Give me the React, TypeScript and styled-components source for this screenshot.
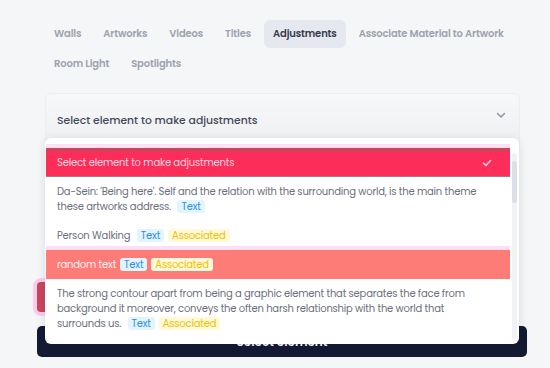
import React from "react";
import styled, { createGlobalStyle } from "styled-components";

const GlobalStyle = createGlobalStyle`
  html, body { margin: 0; padding: 0; }
  body {
    background: #f4f6f7;
    font-family: "Poppins", "Inter", "Noto Sans", sans-serif;
    -webkit-font-smoothing: antialiased;
  }
  * { box-sizing: border-box; }
`;

const Page = styled.div`
  position: relative;
  width: 550px;
  height: 368px;
  overflow: hidden;
  background: #f4f6f7;
  padding: 20px 23px 0 37px;
`;

const Content = styled.div`
  display: flex;
  flex-direction: column;
`;

const Tabs = styled.div`
  display: flex;
  flex-wrap: wrap;
  gap: 2px 4px;
  padding-left: 8px;
  width: 490px;
`;

const Tab = styled.div<{ $active?: boolean }>`
  height: 28px;
  padding: 0 9px;
  display: flex;
  align-items: center;
  border-radius: 6px;
  font-size: 10px;
  font-weight: 600;
  letter-spacing: -0.15px;
  color: ${(p) => (p.$active ? "#353a4c" : "#9da2b0")};
  background: ${(p) => (p.$active ? "#e5e8ef" : "transparent")};
`;

const SelectCard = styled.div`
  margin: 15px 0 0 8px;
  width: 475px;
  height: 60px;
  border: 1px solid #eceef1;
  border-radius: 6px;
  background: linear-gradient(#f7f8f9, #eceef0);
  display: flex;
  justify-content: space-between;
  padding: 19px 12px 0 11px;
`;

const SelectLabel = styled.div`
  font-size: 10.8px;
  font-weight: 500;
  line-height: 16px;
  color: #454a5b;
`;

const Chevron = styled.svg`
  margin-top: -4px;
  width: 12px;
  height: 12px;
`;

const Hidden = styled.div`
  height: 129px;
`;

const DangerButton = styled.div`
  height: 30px;
  width: 470px;
  border-radius: 4px;
  background: #c9475b;
  box-shadow: 0 0 0 4px #fccdea;
`;

const PrimaryButton = styled.div`
  margin-top: 14px;
  height: 31px;
  width: 490px;
  border-radius: 5px;
  background: #141a33;
  color: #ffffff;
  font-size: 12px;
  font-weight: 600;
  display: flex;
  align-items: center;
  justify-content: center;
`;

const Dropdown = styled.div`
  position: absolute;
  left: 45px;
  top: 138px;
  width: 474px;
  height: 206px;
  background: #ffffff;
  border-radius: 6px;
  box-shadow: 0 2px 10px rgba(20, 26, 51, 0.12);
  overflow: hidden;
  display: flex;
  padding: 10px 2px 0 1px;
`;

const List = styled.div`
  flex: 1;
  display: flex;
  flex-direction: column;
`;

const Item = styled.div<{ $variant?: "selected" | "hover" }>`
  position: relative;
  padding: 7px 11px;
  font-size: 10px;
  letter-spacing: -0.2px;
  line-height: 15px;
  color: ${(p) =>
    p.$variant === "selected" ? "#ffd3df" : p.$variant === "hover" ? "#fff1ee" : "#6b7080"};
  background: ${(p) =>
    p.$variant === "selected" ? "#fd2d5a" : p.$variant === "hover" ? "#fd7c78" : "#ffffff"};
  border-top: ${(p) => (p.$variant === "selected" ? "3px solid #c4485b" : "none")};
  border-bottom: ${(p) => (p.$variant === "selected" ? "1px solid #9f7c82" : "none")};
  box-shadow: ${(p) => (p.$variant ? "0 -4px 0 0 #fde0f3" : "none")};
  padding-top: ${(p) => (p.$variant === "selected" ? "4px" : "7px")};
  padding-bottom: ${(p) => (p.$variant === "selected" ? "6px" : "7px")};
  display: flex;
  align-items: center;
  justify-content: space-between;
`;

const ItemText = styled.div``;

const Badge = styled.span<{ $kind: "text" | "assoc" }>`
  display: inline-block;
  margin-left: 4px;
  padding: 0 4px;
  border-radius: 3px;
  line-height: 13px;
  font-size: 10px;
  color: ${(p) => (p.$kind === "text" ? "#2f8de4" : "#ecc300")};
  background: ${(p) => (p.$kind === "text" ? "#e2f5fd" : "#fff8d9")};
`;

const Check = styled.svg`
  width: 10px;
  height: 10px;
  margin-right: 7px;
`;

const ScrollTrack = styled.div`
  width: 5px;
  margin: 5px 0 5px 2px;
  border-radius: 3px;
  background: #f1f2f5;
  display: flex;
  flex-direction: column;
`;

const ScrollThumb = styled.div`
  margin-top: 8px;
  height: 42px;
  border-radius: 3px;
  background: #dcdfe6;
`;

const tabs = [
  "Walls",
  "Artworks",
  "Videos",
  "Titles",
  "Adjustments",
  "Associate Material to Artwork",
  "Room Light",
  "Spotlights",
];

export default function App() {
  return (
    <>
      <GlobalStyle />
      <Page>
        <Content>
          <Tabs>
            {tabs.map((t) => (
              <Tab key={t} $active={t === "Adjustments"}>
                {t}
              </Tab>
            ))}
          </Tabs>
          <SelectCard>
            <SelectLabel>Select element to make adjustments</SelectLabel>
            <Chevron viewBox="0 0 12 12">
              <path d="M2.5 4.5 L6 8 L9.5 4.5" fill="none" stroke="#8b8f9b" strokeWidth="1.4" strokeLinecap="round" strokeLinejoin="round" />
            </Chevron>
          </SelectCard>
          <Hidden />
          <DangerButton />
          <PrimaryButton>Select element</PrimaryButton>
        </Content>
        <Dropdown>
          <List>
            <Item $variant="selected">
              <ItemText>Select element to make adjustments</ItemText>
              <Check viewBox="0 0 10 10">
                <path d="M1.5 5.2 L4 7.5 L8.5 2.5" fill="none" stroke="#ffc9d8" strokeWidth="1.6" strokeLinecap="round" strokeLinejoin="round" />
              </Check>
            </Item>
            <Item>
              <ItemText>
                Da-Sein: 'Being here'. Self and the relation with the surrounding world, is the main theme
                <br />
                these artworks address. <Badge $kind="text">Text</Badge>
              </ItemText>
            </Item>
            <Item>
              <ItemText>
                Person Walking <Badge $kind="text">Text</Badge>
                <Badge $kind="assoc">Associated</Badge>
              </ItemText>
            </Item>
            <Item $variant="hover">
              <ItemText>
                random text<Badge $kind="text">Text</Badge>
                <Badge $kind="assoc">Associated</Badge>
              </ItemText>
            </Item>
            <Item>
              <ItemText>
                The strong contour apart from being a graphic element that separates the face from
                <br />
                background it moreover, conveys the often harsh relationship with the world that
                <br />
                surrounds us. <Badge $kind="text">Text</Badge>
                <Badge $kind="assoc">Associated</Badge>
              </ItemText>
            </Item>
          </List>
          <ScrollTrack>
            <ScrollThumb />
          </ScrollTrack>
        </Dropdown>
      </Page>
    </>
  );
}
